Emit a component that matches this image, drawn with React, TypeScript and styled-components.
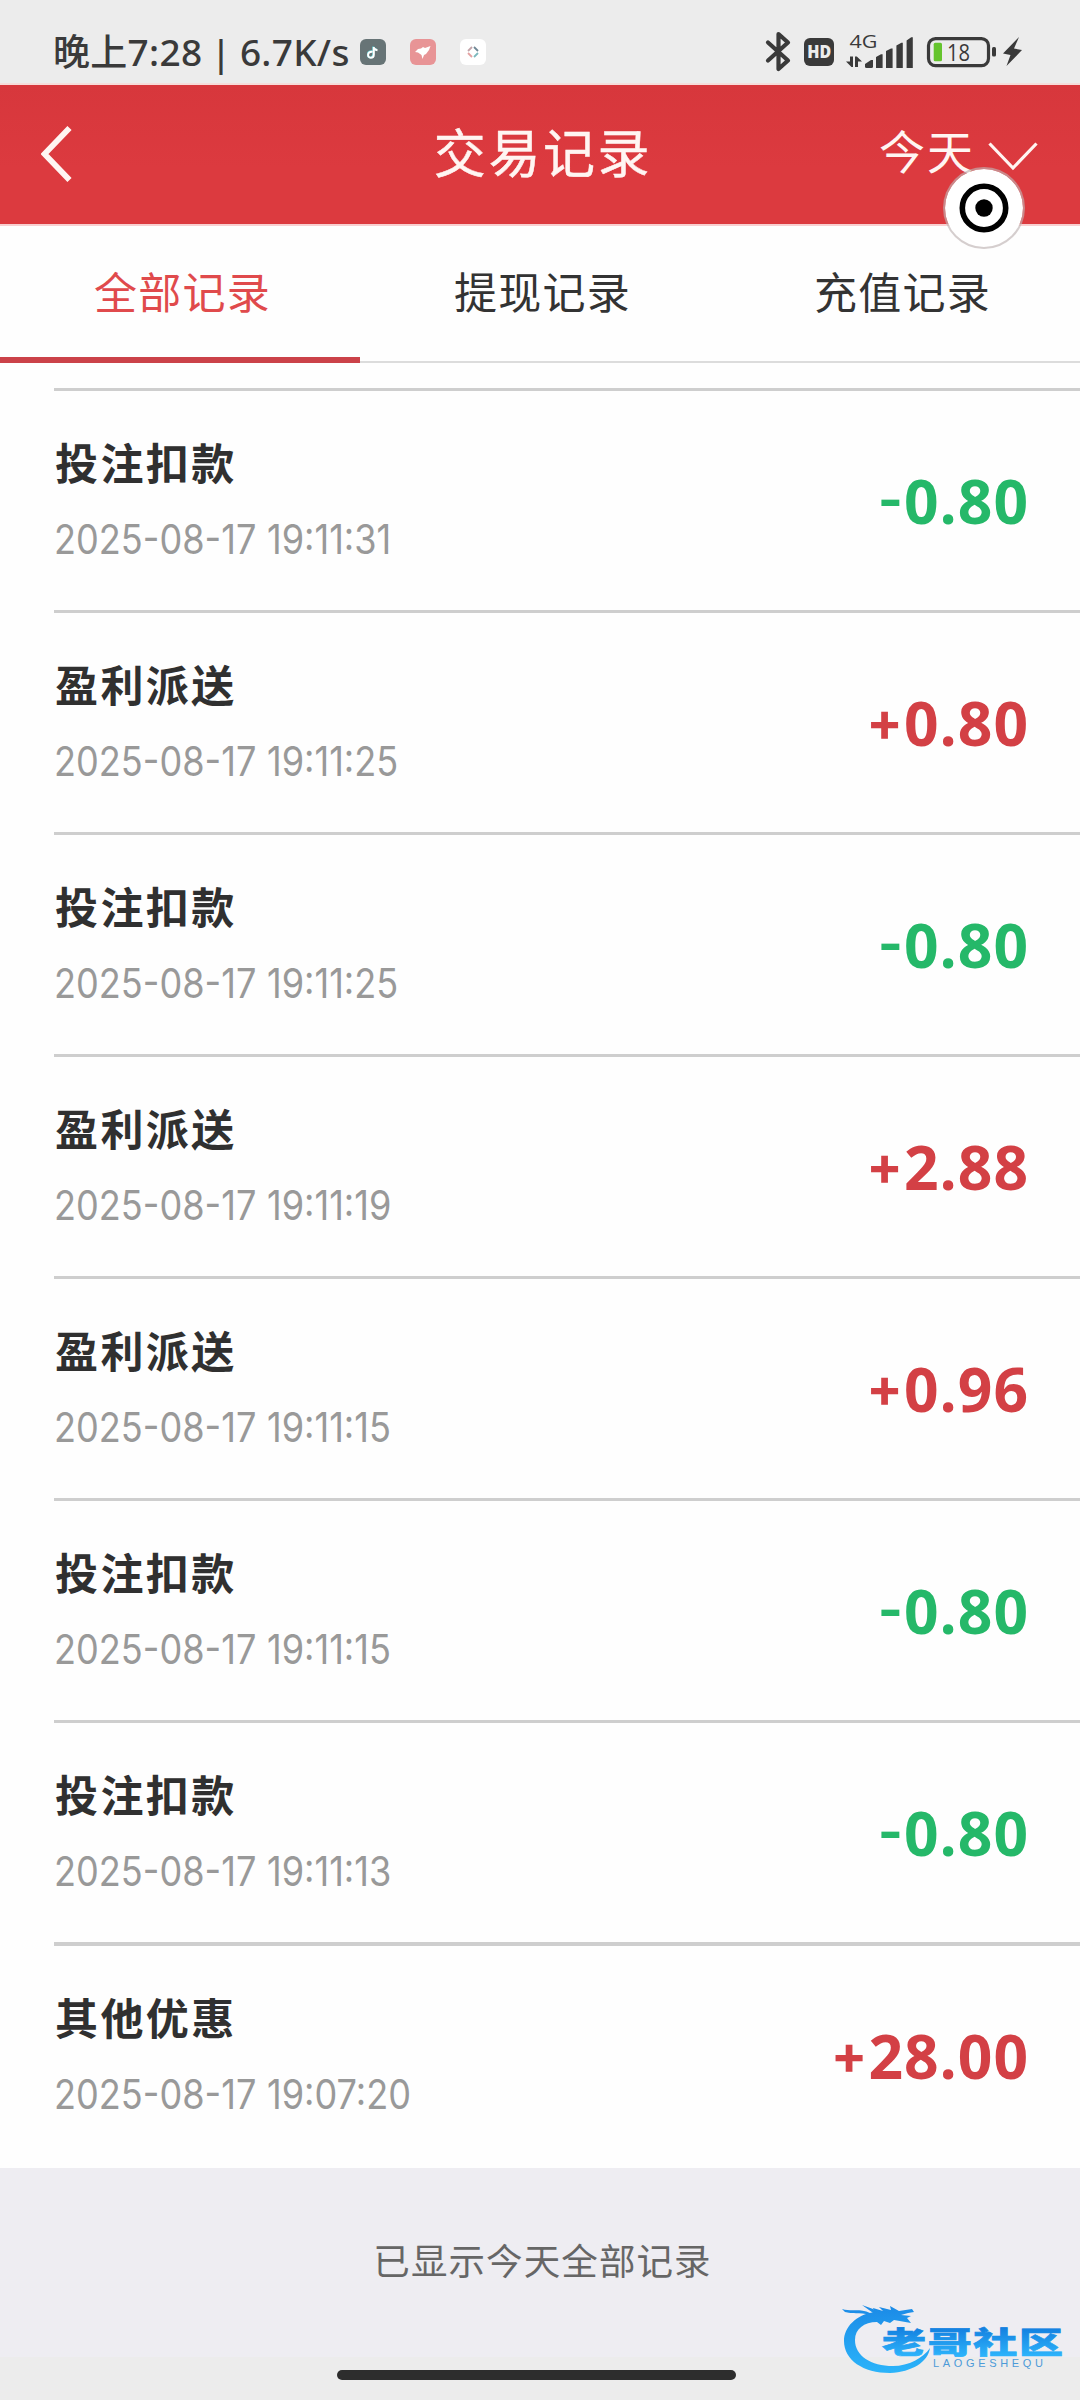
import React from 'react';
import styled, { createGlobalStyle } from 'styled-components';

const CJK = '"Noto Sans CJK SC", sans-serif';

const GlobalStyle = createGlobalStyle`
  * { box-sizing: border-box; }
  body {
    margin: 0;
    background: #fefefe;
    font-family: ${CJK};
    -webkit-font-smoothing: antialiased;
  }
`;

const Screen = styled.div`
  position: relative;
  display: flex;
  flex-direction: column;
  width: 1080px;
  height: 2400px;
  overflow: hidden;
  background: #fefefe;
`;

const StatusBar = styled.div`
  display: flex;
  justify-content: space-between;
  align-items: flex-start;
  height: 85px;
  padding: 30px 56px 0 53px;
  background: #ececec;
  border-bottom: 2px solid #f6dcda;
  flex: none;
`;

const StatusGroup = styled.div`
  display: flex;
  align-items: center;
  height: 44px;
`;

const StatusSvg = styled.svg`
  overflow: visible;
`;

const Clock = styled.div`
  width: 307px;
  white-space: nowrap;
  font: 500 37px/44px "Noto Sans", ${CJK};
  letter-spacing: 0.3px;
  word-spacing: -1.5px;
  color: #3a3a3a;
`;

const AppBadge = styled.div<{ $bg: string }>`
  display: flex;
  align-items: center;
  justify-content: center;
  width: 26px;
  height: 26px;
  margin-right: 24px;
  border-radius: 6px;
  background: ${(p) => p.$bg};
`;

const Header = styled.header`
  display: grid;
  grid-template-columns: 1fr auto 1fr;
  align-items: center;
  height: 141px;
  padding: 0 42px 4px 41px;
  background: linear-gradient(#d7373c, #dc3a3f 60%);
  border-bottom: 2px solid #f8cfd0;
  flex: none;
`;

const BackButton = styled.button`
  display: flex;
  padding: 2px 0 0;
  border: 0;
  background: none;
`;

const Title = styled.h1`
  margin: 0;
  padding: 0 0 4px 7px;
  font: 400 52px/66px ${CJK};
  letter-spacing: 2.6px;
  color: #fff5f2;
  -webkit-text-stroke: 0.5px #fff5f2;
`;

const RangePicker = styled.div`
  display: flex;
  justify-content: flex-end;
  align-items: center;
  font: 400 46px/64px ${CJK};
  letter-spacing: 2px;
  color: #fff5f2;
`;

const RangeLabel = styled.span`
  margin-right: 13px;
  padding-bottom: 8px;
`;

const ChevronDown = styled.svg`
  margin-top: 6px;
`;

const AssistBall = styled.div`
  position: absolute;
  left: 943px;
  top: 167px;
  display: flex;
  align-items: center;
  justify-content: center;
  width: 82px;
  height: 82px;
  border-radius: 50%;
  border: 2px solid rgba(190, 180, 180, 0.65);
  background: #fff;
  background-clip: padding-box;
`;

const Tabs = styled.nav`
  display: grid;
  grid-template-columns: repeat(3, 1fr);
  height: 137px;
  flex: none;
`;

const Tab = styled.div<{ $active?: boolean }>`
  display: flex;
  justify-content: center;
  padding: 32px 0 0 5px;
  font: 400 43px/64px ${CJK};
  letter-spacing: 1.3px;
  color: ${(p) => (p.$active ? '#e04a4c' : '#333')};
  border-bottom: ${(p) => (p.$active ? '6px solid #cb4249' : '2px solid #dcdcdc')};
`;

const List = styled.ul`
  margin: 0;
  padding: 25px 0 0 54px;
  list-style: none;
  flex: none;
`;

const Row = styled.li`
  display: flex;
  justify-content: space-between;
  height: 222px;
  padding-right: 51px;
  border-top: 3px solid #cecece;

  &:last-child {
    height: 226px;
    border-top-width: 4px;
  }
`;

const RowInfo = styled.div`
  display: flex;
  flex-direction: column;
  padding-top: 38px;
`;

const RowTitle = styled.div`
  padding-left: 1px;
  font: 700 43px/64px ${CJK};
  letter-spacing: 2.4px;
  color: #303030;
`;

const RowTime = styled.div`
  margin-top: 19px;
  white-space: nowrap;
  font: 400 40.5px/56px Inter, ${CJK};
  transform: scaleX(0.892);
  transform-origin: left;
  word-spacing: 0.5px;
  color: #999;
`;

const Amount = styled.div<{ $gain: boolean }>`
  padding-top: 68px;
  font: 700 60.5px/84px "Open Sans", ${CJK};
  letter-spacing: 1px;
  color: ${(p) => (p.$gain ? '#d34045' : '#25b869')};
`;

const Sign = styled.span`
  font: 700 54px/40px Inter, sans-serif;
  vertical-align: 5px;
`;

const Footer = styled.footer`
  display: flex;
  justify-content: center;
  height: 189px;
  padding: 65px 0 0 5px;
  background: #eeedf2;
  font: 400 36.5px/54px ${CJK};
  letter-spacing: 1.1px;
  color: #666;
  flex: none;
`;

const GestureArea = styled.div`
  display: flex;
  height: 43px;
  padding: 13px 0 0 337px;
  background: #ececec;
  flex: none;
`;

const GesturePill = styled.div`
  width: 399px;
  height: 10px;
  border-radius: 5px;
  background: #2d2d2d;
`;

const WatermarkSvg = styled.svg`
  position: absolute;
  left: 836px;
  top: 2296px;
`;

const records = [
  { title: '投注扣款', time: '2025-08-17 19:11:31', amount: '-0.80' },
  { title: '盈利派送', time: '2025-08-17 19:11:25', amount: '+0.80' },
  { title: '投注扣款', time: '2025-08-17 19:11:25', amount: '-0.80' },
  { title: '盈利派送', time: '2025-08-17 19:11:19', amount: '+2.88' },
  { title: '盈利派送', time: '2025-08-17 19:11:15', amount: '+0.96' },
  { title: '投注扣款', time: '2025-08-17 19:11:15', amount: '-0.80' },
  { title: '投注扣款', time: '2025-08-17 19:11:13', amount: '-0.80' },
  { title: '其他优惠', time: '2025-08-17 19:07:20', amount: '+28.00' },
];

function StatusIcons() {
  const ink = '#3a3a3a';
  return (
    <StatusSvg width="260" height="44" viewBox="764 30 260 44">
      <path d="M768 42.5L788 60.5L778.5 69V34L788 42.5L768 60.5" fill="none" stroke={ink} strokeWidth="4.2" strokeLinejoin="round" strokeLinecap="round" />
      <rect x="804" y="38" width="30" height="28" rx="6" fill={ink} />
      <text x="807.3" y="58.2" textLength="24" lengthAdjust="spacingAndGlyphs" fontFamily="Open Sans, sans-serif" fontWeight="800" fontSize="17.5" fill="#ececec">HD</text>
      <text x="849.5" y="48" textLength="28" lengthAdjust="spacingAndGlyphs" fontFamily="Open Sans, sans-serif" fontWeight="500" fontSize="19" fill={ink}>4G</text>
      <path d="M846 61.5H850V56.5H853V67H851.5ZM855 67V56.5H856.8L862 61.5H858V67Z" fill={ink} />
      <path d="M865 66.5V64L871 60H873V66.5Q873 68 871.5 68H866.5Q865 68 865 66.5Z" fill={ink} />
      <path d="M876 68V57L881 54.3H882.6V68ZM886 68V51L891 48.5H892.6V68ZM896.4 68V45.4L901.4 42.7H902.8V68ZM906.6 68V40.5L911.2 37.3H912.8V68Z" fill={ink} />
      <rect x="928.5" y="38.6" width="60" height="27" rx="7" fill="none" stroke={ink} strokeWidth="3.2" />
      <rect x="933.7" y="42.8" width="8.3" height="18.5" rx="1.5" fill="#65c42e" />
      <text x="947" y="61" textLength="23" lengthAdjust="spacingAndGlyphs" fontFamily="Open Sans, sans-serif" fontWeight="500" fontSize="23" fill={ink}>18</text>
      <rect x="992" y="47" width="4" height="9.5" rx="1.5" fill={ink} />
      <path d="M1019 37L1003 53.5L1010.5 55L1006.5 66L1022 50L1014 48.5Z" fill={ink} />
    </StatusSvg>
  );
}

function Watermark() {
  return (
    <WatermarkSvg width="236" height="84" viewBox="836 2296 236 84">
      <defs>
        <linearGradient id="wave" x1="0" y1="2305" x2="0" y2="2373" gradientUnits="userSpaceOnUse">
          <stop offset="0" stopColor="#1b8ae6" />
          <stop offset="1" stopColor="#2bb4fa" />
        </linearGradient>
        <linearGradient id="word" x1="0" y1="-36" x2="0" y2="4" gradientUnits="userSpaceOnUse">
          <stop offset="0" stopColor="#1480e0" />
          <stop offset="1" stopColor="#2cb2fa" />
        </linearGradient>
      </defs>
      <g fill="url(#wave)">
        <path d="M874 2312C856 2315 844 2327 844 2341C844 2360 863 2373 890 2373C912 2372 928 2362 930 2348C923 2358 909 2366 893 2366C871 2366 855 2356 855 2340C855 2329 864 2322 877 2322L881 2325L884 2321L890 2323L894 2320L911 2323L907 2318L911 2316L901 2315L908 2313L914 2312L912 2309L899 2311L890 2306L891 2310L879 2307L883 2311L873 2308Z" />
        <path d="M842 2309C852 2312 860 2308 870 2313L876 2315L862 2305L873 2309L880 2315L872 2317C864 2311 855 2315 845 2312Z" />
      </g>
      <g transform="translate(882 2352.5) scale(1 .68)">
        <text textLength="181" fontFamily='"Noto Sans CJK SC", sans-serif' fontWeight="900" fontSize="44" fill="url(#word)" stroke="url(#word)" strokeWidth="1">老哥社区</text>
      </g>
      <text x="933" y="2367" textLength="110" fontFamily="Liberation Sans, sans-serif" fontSize="11" fill="#4c9bd8">LAOGESHEQU</text>
    </WatermarkSvg>
  );
}

export default function App() {
  return (
    <Screen>
      <GlobalStyle />
      <StatusBar>
        <StatusGroup>
          <Clock>晚上7:28 | 6.7K/s</Clock>
          <AppBadge $bg="#677476">
            <svg width="12" height="13" viewBox="0 0 12 13" fill="none" strokeWidth="2">
              <path d="M5.5 5.8C0 5 0 11.8 3.8 11.8C6 11.8 6.8 10.5 6.8 8.5V1C7 3 8.5 4 10.5 4.2" stroke="#5ec8cc" transform="translate(-.6 -.4)" />
              <path d="M5.5 5.8C0 5 0 11.8 3.8 11.8C6 11.8 6.8 10.5 6.8 8.5V1C7 3 8.5 4 10.5 4.2" stroke="#fff" />
            </svg>
          </AppBadge>
          <AppBadge $bg="#e89496">
            <svg width="16" height="13" viewBox="0 0 16 13" fill="#fff">
              <path d="M0 6L3 3L6 2.5L8 1L10 2L15.5 0L14 4L11 8L9 9L7.5 13L6.5 9L3 6.5Z" />
            </svg>
          </AppBadge>
          <AppBadge $bg="#fff">
            <svg width="12" height="12" viewBox="0 0 12 12" fill="none" strokeWidth="1.8">
              <path d="M1 5L5 1" stroke="#c2a3a8" />
              <path d="M7 1L11 5" stroke="#6f8795" />
              <path d="M11 7L7 11" stroke="#7cb9bd" />
              <path d="M5 11L1 7" stroke="#e4a1a1" />
            </svg>
          </AppBadge>
        </StatusGroup>
        <StatusIcons />
      </StatusBar>
      <Header>
        <BackButton aria-label="返回">
          <svg width="34" height="56" viewBox="0 0 34 56" fill="none" stroke="#fff5f2" strokeWidth="5.8">
            <path d="M28.5 2L3.5 28L28.5 54" />
          </svg>
        </BackButton>
        <Title>交易记录</Title>
        <RangePicker>
          <RangeLabel>今天</RangeLabel>
          <ChevronDown width="50" height="30" viewBox="0 0 50 30" fill="none" stroke="#fff5f2" strokeWidth="3.2">
            <path d="M1.5 2.5L25 27L48.5 2.5" />
          </ChevronDown>
        </RangePicker>
      </Header>
      <Tabs>
        <Tab $active>全部记录</Tab>
        <Tab>提现记录</Tab>
        <Tab>充值记录</Tab>
      </Tabs>
      <List>
        {records.map((r, i) => (
          <Row key={i}>
            <RowInfo>
              <RowTitle>{r.title}</RowTitle>
              <RowTime>{r.time}</RowTime>
            </RowInfo>
            <Amount $gain={r.amount.startsWith('+')}>
              <Sign>{r.amount[0]}</Sign>
              {r.amount.slice(1)}
            </Amount>
          </Row>
        ))}
      </List>
      <Footer>已显示今天全部记录</Footer>
      <GestureArea>
        <GesturePill />
      </GestureArea>
      <AssistBall>
        <svg width="50" height="50" viewBox="0 0 50 50">
          <circle cx="25" cy="25" r="21.7" fill="none" stroke="#000" strokeWidth="5.6" />
          <circle cx="25" cy="25" r="8.7" fill="#000" />
        </svg>
      </AssistBall>
      <Watermark />
    </Screen>
  );
}
